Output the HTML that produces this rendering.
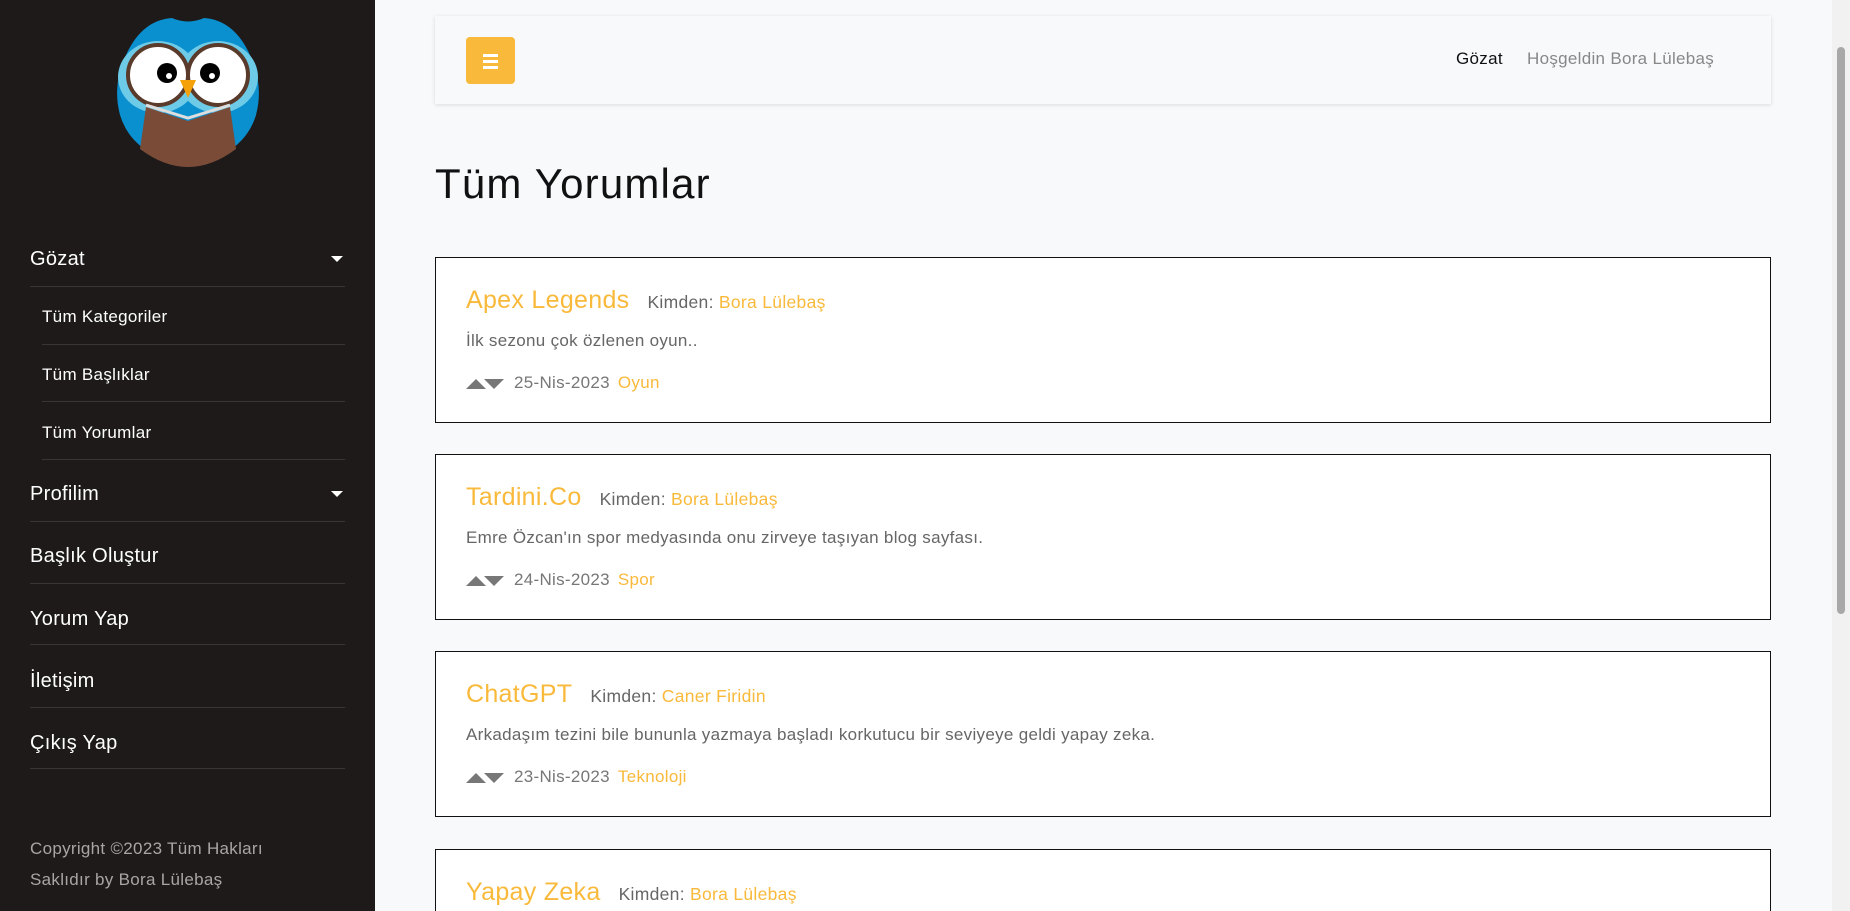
<!DOCTYPE html>
<html><head><meta charset="utf-8"><style>
*{margin:0;padding:0;box-sizing:border-box}
html,body{width:1850px;height:911px;overflow:hidden}
body{background:#f8f9fa;font-family:"Liberation Sans",sans-serif;position:relative}
#sb{position:absolute;left:0;top:0;width:375px;height:911px;background:#1e1a1a;color:#fff}
.it{position:absolute;left:30px;width:315px;font-size:20px;color:#fff;border-bottom:1px solid #3a3535;padding-top:5px;letter-spacing:.3px}
.sub{left:42px;width:303px;font-size:17px}
.car{position:absolute;right:2px;top:13px;width:0;height:0;border-left:6px solid transparent;border-right:6px solid transparent;border-top:6px solid #fff}
#copy{position:absolute;left:30px;top:833px;font-size:17px;line-height:31px;color:#a8a5a5;letter-spacing:.3px}
#nav{position:absolute;left:435px;top:16px;width:1336px;height:88px;background:#f8f9fa;box-shadow:0 1px 4px rgba(0,0,0,.12)}
#btn{position:absolute;left:31px;top:21px;width:49px;height:47px;background:#f9b93a;border-radius:4px}
#btn i{position:absolute;left:17px;width:15px;height:3px;background:#fff}
.nl{position:absolute;top:33px;font-size:17px;color:#888;letter-spacing:.3px}
h1{position:absolute;left:435px;top:160px;font-size:42px;font-weight:normal;color:#111;letter-spacing:1.2px}
.card{position:absolute;left:435px;width:1336px;height:166px;background:#fff;border:1px solid #111}
.t{position:absolute;left:30px;top:28px;font-size:25px;color:#f9b93a;white-space:nowrap;letter-spacing:.3px}
.t span{font-size:17.5px;color:#666;margin-left:18px}
.t b{font-weight:normal;color:#f9b93a}
.d{position:absolute;left:30px;top:73px;font-size:17px;color:#666;letter-spacing:.3px}
.m{position:absolute;left:30px;top:115px;font-size:17px;color:#777;white-space:nowrap;letter-spacing:.3px}
.m b{font-weight:normal;color:#f9b93a;margin-left:8px}
.tri{display:inline-block;width:0;height:0;border-left:10px solid transparent;border-right:10px solid transparent;vertical-align:middle}
#scr{position:absolute;left:1832px;top:0;width:18px;height:911px;background:#f1f1f1}
#scr i{position:absolute;left:5px;top:47px;width:8px;height:567px;background:#a8a8a8;border-radius:4px}
</style></head><body>
<div id="sb">
<svg style="position:absolute;left:112px;top:15px" width="152" height="152" viewBox="0 0 152 152">
<path d="M14 40 Q30 5 60 3 Q76 10 92 3 Q122 5 138 40 Q152 70 144 100 Q132 140 76 152 Q20 140 8 100 Q0 70 14 40Z" fill="#0a8fcf"/>
<ellipse cx="46" cy="62" rx="40" ry="36" fill="#6ecbe8"/><ellipse cx="106" cy="62" rx="40" ry="36" fill="#6ecbe8"/>
<circle cx="46" cy="60" r="30" fill="#fff" stroke="#5a3a2a" stroke-width="4"/><circle cx="106" cy="60" r="30" fill="#fff" stroke="#5a3a2a" stroke-width="4"/>
<circle cx="55" cy="58" r="10" fill="#000"/><circle cx="57" cy="61" r="3" fill="#fff"/>
<circle cx="98" cy="58" r="10" fill="#000"/><circle cx="100" cy="61" r="3" fill="#fff"/>
<path d="M68 65 L84 65 L76 83Z" fill="#f5a20a"/>
<path d="M34 92 L76 106 L118 92 L124 134 Q100 152 76 152 Q52 152 28 134Z" fill="#7a4c38"/>
<path d="M34 90 L76 103 L118 90" stroke="#ddd" stroke-width="3" fill="none"/>
</svg>
<div class="it" style="top:243px;height:44px">Gözat<span class="car"></span></div>
<div class="it sub" style="top:302px;height:43px">Tüm Kategoriler</div>
<div class="it sub" style="top:360px;height:42px">Tüm Başlıklar</div>
<div class="it sub" style="top:418px;height:42px">Tüm Yorumlar</div>
<div class="it" style="top:478px;height:44px">Profilim<span class="car"></span></div>
<div class="it" style="top:540px;height:44px">Başlık Oluştur</div>
<div class="it" style="top:603px;height:42px">Yorum Yap</div>
<div class="it" style="top:665px;height:43px">İletişim</div>
<div class="it" style="top:727px;height:42px">Çıkış Yap</div>
<div id="copy">Copyright ©2023 Tüm Hakları<br>Saklıdır by Bora Lülebaş</div>
</div>
<div id="nav"><div id="btn"><i style="top:17px"></i><i style="top:23px"></i><i style="top:29px"></i></div>
<span class="nl" style="left:1021px;color:#111">Gözat</span><span class="nl" style="left:1092px">Hoşgeldin Bora Lülebaş</span></div>
<h1>Tüm Yorumlar</h1>
<div class="card" style="top:257px"><div class="t">Apex Legends<span>Kimden: <b>Bora Lülebaş</b></span></div><div class="d">İlk sezonu çok özlenen oyun..</div><div class="m"><span class="tri" style="border-bottom:10px solid #777"></span><span class="tri" style="border-top:10px solid #777;margin-left:-2px;margin-right:10px"></span>25-Nis-2023<b>Oyun</b></div></div>
<div class="card" style="top:454px"><div class="t">Tardini.Co<span>Kimden: <b>Bora Lülebaş</b></span></div><div class="d">Emre Özcan'ın spor medyasında onu zirveye taşıyan blog sayfası.</div><div class="m"><span class="tri" style="border-bottom:10px solid #777"></span><span class="tri" style="border-top:10px solid #777;margin-left:-2px;margin-right:10px"></span>24-Nis-2023<b>Spor</b></div></div>
<div class="card" style="top:651px"><div class="t">ChatGPT<span>Kimden: <b>Caner Firidin</b></span></div><div class="d">Arkadaşım tezini bile bununla yazmaya başladı korkutucu bir seviyeye geldi yapay zeka.</div><div class="m"><span class="tri" style="border-bottom:10px solid #777"></span><span class="tri" style="border-top:10px solid #777;margin-left:-2px;margin-right:10px"></span>23-Nis-2023<b>Teknoloji</b></div></div>
<div class="card" style="top:849px;height:80px;border-bottom:none"><div class="t">Yapay Zeka<span>Kimden: <b>Bora Lülebaş</b></span></div></div>
<div id="scr"><i></i></div>
</body></html>
